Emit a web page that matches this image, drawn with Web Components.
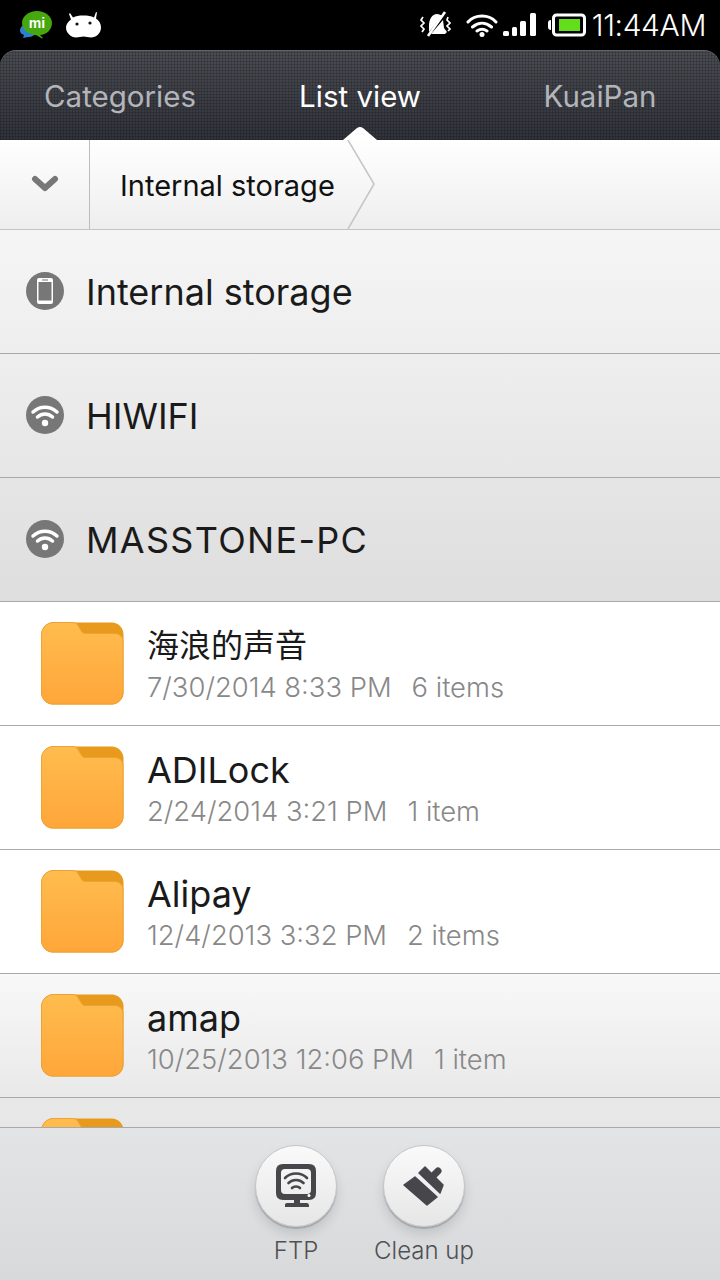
<!DOCTYPE html>
<html>
<head>
<meta charset="utf-8">
<style>
  html, body { margin: 0; padding: 0; background: #000; }
  body { width: 720px; height: 1280px; overflow: hidden; font-family: Inter, "Noto Sans CJK SC", sans-serif; }
</style>
</head>
<body>
<file-app>
  <status-bar></status-bar>
  <tab-bar></tab-bar>
  <path-bar label="Internal storage"></path-bar>
  <file-list>
    <storage-row icon="phone" label="Internal storage" shade="a"></storage-row>
    <storage-row icon="wifi" label="HIWIFI" shade="b"></storage-row>
    <storage-row icon="wifi" label="MASSTONE-PC" shade="c" spread="1.3"></storage-row>
    <folder-row name="海浪的声音" date="7/30/2014 8:33 PM" count="6 items" size="32"></folder-row>
    <folder-row name="ADILock" date="2/24/2014 3:21 PM" count="1 item"></folder-row>
    <folder-row name="Alipay" date="12/4/2013 3:32 PM" count="2 items"></folder-row>
    <folder-row name="amap" date="10/25/2013 12:06 PM" count="1 item" shade="linear-gradient(#f8f8f8, #e9e9ea)"></folder-row>
    <folder-row shade="linear-gradient(#e8e8e9, #e4e4e6)"></folder-row>
  </file-list>
  <action-bar>
    <action-button icon="ftp" label="FTP"></action-button>
    <action-button icon="clean" label="Clean up"></action-button>
  </action-bar>
</file-app>

<script>
// ================ App shell ================

class FileApp extends HTMLElement {
  constructor() {
    super();
    const shadow = this.attachShadow({ mode: "open" });
    shadow.innerHTML = `
    <style>
      :host { display: flex; flex-direction: column; width: 720px; height: 1280px; background: #000; }
    </style>
    <slot></slot>
    `;
  }
}
customElements.define("file-app", FileApp);


// ================ Status bar ================

class StatusBar extends HTMLElement {
  constructor() {
    super();
    const shadow = this.attachShadow({ mode: "open" });
    shadow.innerHTML = `
    <style>
      :host { display: flex; align-items: center; height: 50px; flex: none; background: #000; color: #fff; }
      .left { display: flex; align-items: center; gap: 13px; padding-left: 20px; flex: 1; }
      .right { display: flex; align-items: center; padding-right: 14px; }
      svg { display: block; }
      .time { font: 300 30px Inter, sans-serif; margin-left: 6px; letter-spacing: -.4px; }
    </style>
    <div class="left">
      <svg width="33" height="28" viewBox="0 0 33 28">
        <path d="M0 20c0-4 3-7 8-7s8 3 8 7-4 6-8 6l-5 1 1-3c-2-1-4-2-4-4z" fill="#2a7fd6"/>
        <path d="M2 12C2 5 9 0 17 0s15 5 15 12-6 12-12 12l3 3-1 .5-6-3.500C9 24 2 19 2 12z" fill="#46a80e"/>
        <text x="17" y="17" font-family="Liberation Sans" font-weight="700" font-size="14" fill="#fff" text-anchor="middle">mi</text>
      </svg>
      <svg width="35" height="28" viewBox="0 0 35 28">
        <path d="M3 3l1-1 3 4.500C10 5 13 4.500 17 4.500c5 0 8 .5 11 2L30 1l1 .5-1 6c3 2 5 5 5 9 0 6-5 10-10 10-3 0-5-1-7.500-1S13 26.500 10 26.500C5 26.500 0 22 0 16.500c0-3 2-6 5-8z" fill="#fff"/>
        <circle cx="11" cy="13" r="1.600" fill="#111"/><circle cx="24" cy="12" r="1.600" fill="#111"/>
      </svg>
    </div>
    <div class="right">
      <svg width="31" height="28" viewBox="0 0 31 28" style="margin-right:15px">
        <path d="M9 15c0-7 3-12 8-12 2 0 4 1 5 2L9 21zM23 9l1 8 3 4-2 2H11z" fill="#fff"/>
        <path d="M25 1 8 25" stroke="#fff" stroke-width="2.600"/>
        <path d="M3 6 1 9l3 3-3 3 3 3-2 3M28 6l-1 3 3 3-3 3 3 3-2 2" fill="none" stroke="#fff" stroke-width="1.700"/>
      </svg>
      <svg width="32" height="24" viewBox="0 0 32 24" style="margin-right:5px">
        <path d="M2 9C9 1 23 1 30 9M6.500 14c6-5 13-5 19 0M11 18c3-2 7-2 10 0" fill="none" stroke="#fff" stroke-width="3" stroke-linecap="round"/>
        <circle cx="16" cy="21.500" r="2.500" fill="#fff"/>
      </svg>
      <svg width="34" height="24" viewBox="0 0 34 24" style="margin-right:11px">
        <rect x="0" y="18" width="6" height="5" rx="1.500" fill="#fff"/>
        <rect x="9" y="14" width="5" height="9" rx="1.500" fill="#fff"/>
        <rect x="17" y="8" width="6" height="15" rx="1.500" fill="#fff"/>
        <rect x="27" y="0" width="6" height="23" rx="1.500" fill="#fff"/>
      </svg>
      <svg width="38" height="24" viewBox="0 0 38 24">
        <rect x="5.500" y="2" width="31" height="20" rx="3" fill="none" stroke="#fff" stroke-width="3"/>
        <path d="M0 10c0-2 1-3 3-3v10c-2 0-3-1-3-3z" fill="#fff"/>
        <rect x="11" y="6" width="21" height="12" fill="#63de1a"/>
      </svg>
      <span class="time">11:44AM</span>
    </div>
    `;
  }
}
customElements.define("status-bar", StatusBar);


// ================ Tabs ================

class TabBar extends HTMLElement {
  constructor() {
    super();
    const shadow = this.attachShadow({ mode: "open" });
    shadow.innerHTML = `
    <style>
      :host {
        display: grid; grid-template-columns: repeat(3, 1fr); align-items: center;
        height: 90px; flex: none; position: relative; box-sizing: border-box;
        border-radius: 16px 16px 0 0; border-top: 1px solid #63656b;
        font-size: 29.500px; color: #b4b5b9;
        background:
          repeating-linear-gradient(90deg, rgba(0,0,0,.16) 0 1px, transparent 1px 3px),
          repeating-linear-gradient(0deg, rgba(0,0,0,.16) 0 1px, transparent 1px 3px),
          linear-gradient(#4a4c53, #30323a);
      }
      span { text-align: center; }
      .on { color: #fff; }
      .notch { position: absolute; left: 343px; bottom: 0; width: 34px; height: 14px; }
    </style>
    <span>Categories</span>
    <span class="on">List view</span>
    <span>KuaiPan</span>
    <svg class="notch" viewBox="0 0 34 14"><path d="M0 14 14 2q3-2 6 0l14 12z" fill="#fff"/></svg>
    `;
  }
}
customElements.define("tab-bar", TabBar);


// ================ Breadcrumb ================

class PathBar extends HTMLElement {
  constructor() {
    super();
    const shadow = this.attachShadow({ mode: "open" });
    shadow.innerHTML = `
    <style>
      :host {
        display: flex; height: 90px; flex: none; position: relative; box-sizing: border-box;
        border-bottom: 1px solid #c4c4c4; background: linear-gradient(#fff, #eeeeee);
      }
      .toggle { width: 90px; flex: none; box-sizing: border-box; border-right: 1px solid #bcbcbc; display: flex; align-items: center; justify-content: center; }
      .crumb { padding-left: 30px; line-height: 91px; font-size: 29px; color: #111; }
      .arrow { position: absolute; left: 346px; top: 0; }
    </style>
    <div class="toggle">
      <svg width="28" height="18" viewBox="0 0 28 18" style="margin-top:-2px"><path d="M4 4l10 9 10-9" fill="none" stroke="#777" stroke-width="6" stroke-linecap="round" stroke-linejoin="round"/></svg>
    </div>
    <div class="crumb"></div>
    <svg class="arrow" width="32" height="89" viewBox="0 0 32 89"><path d="M2 0 28 44 2 89" fill="none" stroke="#c6c6c6" stroke-width="1.500" stroke-linejoin="round"/></svg>
    `;
    this.crumb = shadow.querySelector(".crumb");
  }

  connectedCallback() {
    this.crumb.textContent = this.getAttribute("label") || "";
  }
}
customElements.define("path-bar", PathBar);


// ================ List ================

class FileList extends HTMLElement {
  constructor() {
    super();
    const shadow = this.attachShadow({ mode: "open" });
    shadow.innerHTML = `
    <style>
      :host { display: block; flex: 1; min-height: 0; overflow: hidden; background: #fff; }
    </style>
    <slot></slot>
    `;
  }
}
customElements.define("file-list", FileList);

const ROW_ICONS = {
  phone: `<path d="M13 6h12q2 0 2 2v22q0 2-2 2H13q-2 0-2-2V8q0-2 2-2z" fill="#fff"/><rect x="12.500" y="10" width="13" height="18.500" fill="#777"/><rect x="16" y="7.500" width="6" height="1" fill="#777"/>`,
  wifi: `<path d="M7 16c7-6.500 17-6.500 24 0M11.500 21c4.500-4 10.500-4 15 0" fill="none" stroke="#fff" stroke-width="3.500" stroke-linecap="round"/><circle cx="19" cy="27" r="3.200" fill="#fff"/>`
};

const SHADES = {
  a: "linear-gradient(#f5f5f5, #eeeeee)",
  b: "linear-gradient(#eeeeee, #e6e6e6)",
  c: "linear-gradient(#e5e5e5, #dedede)"
};

class StorageRow extends HTMLElement {
  constructor() {
    super();
    this.attachShadow({ mode: "open" });
  }

  connectedCallback() {
    this.shadowRoot.innerHTML = `
    <style>
      :host {
        display: flex; align-items: center; height: 124px; box-sizing: border-box; padding: 0 0 0 26px; gap: 22px;
        border-bottom: 1px solid #a9a9a9; font-size: 36px; color: #1a1a1a;
        letter-spacing: ${this.getAttribute("spread") || 0}px;
        background: ${SHADES[this.getAttribute("shade")]};
      }
      svg { flex: none; display: block; margin-top: -2px; }
    </style>
    <svg width="38" height="38" viewBox="0 0 38 38"><circle cx="19" cy="19" r="19" fill="#777"/>${ROW_ICONS[this.getAttribute("icon")]}</svg>
    <span>${this.getAttribute("label")}</span>
    `;
  }
}
customElements.define("storage-row", StorageRow);

class FolderRow extends HTMLElement {
  constructor() {
    super();
    this.attachShadow({ mode: "open" });
  }

  connectedCallback() {
    const name = this.getAttribute("name");
    const text = name ? `
    <div class="text">
      <span class="name">${name}</span>
      <span class="meta"><span>${this.getAttribute("date")}</span><span>${this.getAttribute("count")}</span></span>
    </div>` : "";
    this.shadowRoot.innerHTML = `
    <style>
      :host {
        display: flex; height: 124px; box-sizing: border-box; padding: 20px 0 0 41px; gap: 23px;
        border-bottom: 1px solid #a9a9a9; background: ${this.getAttribute("shade") || "#fff"};
      }
      svg { flex: none; display: block; }
      .text { display: flex; flex-direction: column; padding-top: 2px; }
      .name { font-size: ${this.getAttribute("size") || 36}px; line-height: 44px; color: #1a1a1a; }
      .meta { display: flex; gap: 20px; font-size: 27.400px; font-weight: 300; line-height: 38px; color: #888; }
    </style>
    <svg width="83" height="83" viewBox="0 0 83 83">
      <defs>
        <linearGradient id="f" x1="0" y1="0" x2="0" y2="1"><stop offset="0" stop-color="#ffbc4e"/><stop offset="1" stop-color="#ffa63a"/></linearGradient>
      </defs>
      <path d="M12 .5h59C77 .5 82.500 6 82.500 12v59c0 6-5.500 11.500-11.500 11.500H12C6 82.500.5 77 .5 71V12C.5 6 6 .5 12 .5z" fill="#e89a1c"/>
      <path d="M12 .5h19c3 0 5 1 6 3l3 5c1 2 2 3 5 3h29c4 0 8 3 8 8v51c0 6-5 11.500-11 11.500H12C6 82.500.5 77 .5 71V12C.5 6 6 .5 12 .5z" fill="url(#f)" stroke="#eda233" stroke-width="1"/>
    </svg>${text}
    `;
  }
}
customElements.define("folder-row", FolderRow);


// ================ Bottom actions ================

class ActionBar extends HTMLElement {
  constructor() {
    super();
    const shadow = this.attachShadow({ mode: "open" });
    shadow.innerHTML = `
    <style>
      :host {
        display: flex; justify-content: center; gap: 46px; height: 153px; flex: none; box-sizing: border-box;
        padding-top: 17px; border-top: 1px solid #a9a9a9; background: linear-gradient(#e3e4e6, #d8d9db);
      }
    </style>
    <slot></slot>
    `;
  }
}
customElements.define("action-bar", ActionBar);

const ACTION_ICONS = {
  ftp: `<path fill-rule="evenodd" d="M7 0h26q7 0 7 7v22q0 7-7 7H24v3h7q2 0 2 2.500V43H9v-2.500Q9 39 11 39h7v-3H7q-7 0-7-7V7q0-7 7-7zm2 5q-4 0-4 4v17q0 4 4 4h22q4 0 4-4V9q0-4-4-4z" fill="#47474b" transform="translate(1)"/>
    <path d="M10 14c6-6 16-6 22 0M13.500 19c4-4 11-4 15 0M17 24c2-2 6-2 8 0" fill="none" stroke="#47474b" stroke-width="2.600" stroke-linecap="round"/>
    <circle cx="34" cy="31.500" r="1.500" fill="#fff"/>`,
  clean: `<g fill="#47474b" stroke="#47474b" stroke-width="1.500" stroke-linejoin="round">
      <path d="M1 21 12 13 34 33 24 41z"/>
      <path d="M16 9 22 3 40 21 37 29z"/>
    </g>
    <path d="M29 13l6-6" stroke="#47474b" stroke-width="7" stroke-linecap="round"/>`
};

class ActionButton extends HTMLElement {
  constructor() {
    super();
    this.attachShadow({ mode: "open" });
  }

  connectedCallback() {
    this.shadowRoot.innerHTML = `
    <style>
      :host { display: flex; flex-direction: column; align-items: center; width: 82px; }
      .btn {
        width: 82px; height: 82px; flex: none; box-sizing: border-box; border-radius: 50%;
        display: flex; align-items: center; justify-content: center;
        background: linear-gradient(#fafafa, #e6e6e7);
        border: 1px solid #c4c5c8;
        box-shadow: 0 2px 1px #a5a6a9, 0 7px 12px rgba(0,0,0,.12);
      }
      svg { display: block; }
      span { margin-top: 8px; white-space: nowrap; font-size: 24px; font-weight: 300; line-height: 32px; color: #4f5053; }
    </style>
    <div class="btn"><svg width="42" height="44" viewBox="0 0 42 44">${ACTION_ICONS[this.getAttribute("icon")]}</svg></div>
    <span>${this.getAttribute("label")}</span>
    `;
  }
}
customElements.define("action-button", ActionButton);
</script>
</body>
</html>
